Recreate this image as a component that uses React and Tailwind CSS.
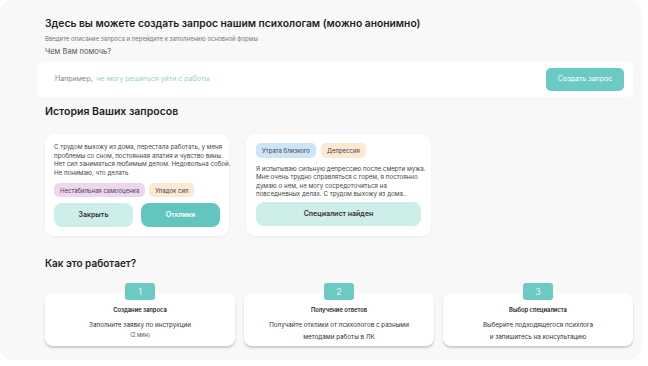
import React from "react";

const font = { fontFamily: "Inter, 'Noto Sans', sans-serif" };

function Tag({ children, cls }) {
  return (
    <span className={`inline-flex h-[14px] items-center rounded-[5px] px-[6px] text-[6px] text-[#444] ${cls}`}>
      {children}
    </span>
  );
}

function Step({ n, title, children }) {
  return (
    <div className="relative flex-1">
      <div className="absolute left-1/2 top-[-10px] flex h-[17px] w-[30px] -translate-x-1/2 items-center justify-center rounded-[3px] bg-[#6cc9c3] text-[9px] font-light text-white">
        {n}
      </div>
      <div className="flex h-[53px] flex-col items-center rounded-[8px] bg-white pt-[13px] text-center shadow-[0_2px_2px_rgba(0,0,0,0.18)]">
        <div className="text-[5.8px] font-semibold leading-[8px] text-[#222]">{title}</div>
        <div className="mt-[5px] text-[6.3px] leading-[12px] text-[#333]">{children}</div>
      </div>
    </div>
  );
}

export default function App() {
  return (
    <div className="h-[366px] w-[648px] bg-white" style={font}>
      <div className="h-[360px] w-[642px] rounded-[14px] bg-[#f8f8f8] pl-[45px] pr-[9px] pt-[16px]">
        <div className="text-[10.3px] font-semibold leading-[14px] text-[#1d1d1d]">
          Здесь вы можете создать запрос нашим психологам (можно анонимно)
        </div>
        <div className="mt-[4px] text-[6px] leading-[9px] text-[#777]">
          Введите описание запроса и перейдите к заполнению основной формы
        </div>
        <div className="mt-[3px] text-[7.5px] font-normal leading-[11px] text-[#555]">Чем Вам помочь?</div>
        <div className="ml-[-8px] mt-[5px] flex h-[35px] items-center rounded-[6px] bg-white pl-[18px] pr-[9px]">
          <span className="text-[7px] text-[#888]">Например,</span>
          <span className="ml-[4px] text-[7px] text-[#8fd3cd]">не могу решиться уйти с работы</span>
          <button className="ml-auto flex h-[23px] w-[78px] items-center justify-center rounded-[5px] bg-[#6ccac4] text-[7px] text-white">
            Создать запрос
          </button>
        </div>

        <div className="mt-[7px] text-[10.5px] font-semibold leading-[16px] text-[#1d1d1d]">История Ваших запросов</div>

        <div className="mt-[14px] flex gap-[17px]">
          <div className="flex h-[102px] w-[184px] flex-col rounded-[9px] bg-white px-[9px] pt-[9px] shadow-[0_1px_3px_rgba(0,0,0,0.05)]">
            <div className="whitespace-nowrap text-[6.2px] leading-[8.5px] text-[#444]">
              С трудом выхожу из дома, перестала работать, у меня
              <br />
              проблемы со сном,  постоянная апатия и чувство вины.
              <br />
              Нет сил заниматься любимым делом. Недовольна собой.
              <br />
              Не понимаю, что делать
            </div>
            <div className="mt-[6px] flex gap-[4px]">
              <Tag cls="bg-[#efd6f0]">Нестабильная самооценка</Tag>
              <Tag cls="bg-[#fde8d2]">Упадок сил</Tag>
            </div>
            <div className="mt-[6px] flex gap-[8px]">
              <button className="h-[24px] flex-1 rounded-[8px] bg-[#cdeee9] text-[7px] font-semibold text-[#333]">Закрыть</button>
              <button className="h-[24px] flex-1 rounded-[8px] bg-[#62c6bf] text-[7px] font-semibold text-white">Отклики</button>
            </div>
          </div>

          <div className="flex h-[102px] w-[185px] flex-col rounded-[9px] bg-white px-[10px] pt-[9px] shadow-[0_1px_3px_rgba(0,0,0,0.05)]">
            <div className="flex gap-[5px]">
              <Tag cls="h-[15px] bg-[#cde5f7]">Утрата близкого</Tag>
              <Tag cls="h-[15px] bg-[#fde8d2]">Депрессия</Tag>
            </div>
            <div className="mt-[7px] whitespace-nowrap text-[6.2px] leading-[8.3px] text-[#444]">
              Я испытываю сильную депрессию после смерти мужа.
              <br />
              Мне очень трудно справляться с горем, я постоянно
              <br />
              думаю о нем,  не могу сосредоточиться на
              <br />
              повседневных делах. С трудом выхожу из дома..
            </div>
            <button className="mt-[4px] h-[24px] w-full rounded-[8px] bg-[#cdeee9] text-[7px] font-semibold text-[#333]">Специалист найден</button>
          </div>
        </div>

        <div className="mt-[20px] text-[10px] font-semibold leading-[14px] text-[#1d1d1d]">Как это работает?</div>

        <div className="mt-[23px] flex gap-[9px]">
          <Step n="1" title="Создание запроса">
            Заполните заявку по инструкции
            <div className="text-[5.6px] leading-[8px] text-[#555]">(2 мин)</div>
          </Step>
          <Step n="2" title="Получение ответов">
            Получайте отклики от психологов с разными
            <br />
            методами работы в ЛК
          </Step>
          <Step n="3" title="Выбор специалиста">
            Выберите подходящегося психлога
            <br />
            и запишитесь на консультацию
          </Step>
        </div>
      </div>
    </div>
  );
}
